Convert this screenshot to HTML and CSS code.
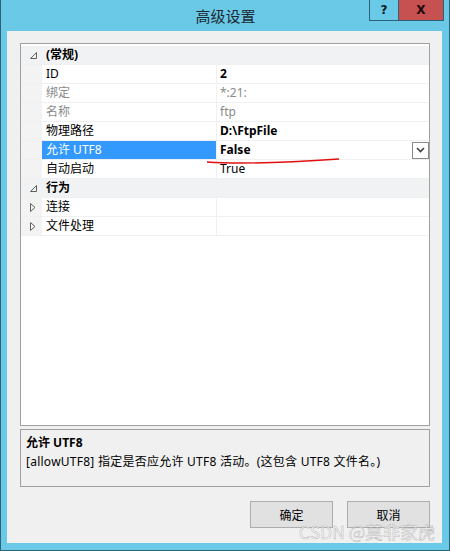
FILE: index.html
```html
<!DOCTYPE html>
<html lang="zh-CN">
<head>
    <meta charset="UTF-8">
    <title>高级设置</title>
    <link rel="stylesheet" href="styles.css">
</head>
<body>
<div class="window">
    <div class="titlebar">
        <div class="title">高级设置</div>
        <div class="caption-btns">
            <span class="cap-help">?</span><span class="cap-close">X</span>
        </div>
    </div>
    <div class="client">
        <div class="grid">
            <div class="row cat">
                <span class="gutter"><svg width="7" height="7" viewBox="0 0 7 7"><path d="M6.5 0.5 L6.5 6.5 L0.5 6.5 Z" fill="none" stroke="#606060" stroke-width="1"/></svg></span>
                <span class="label">(常规)</span><span class="value"></span>
            </div>
            <div class="row">
                <span class="gutter"></span><span class="label">ID</span><span class="value b">2</span>
            </div>
            <div class="row">
                <span class="gutter"></span><span class="label dim">绑定</span><span class="value dim">*:21:</span>
            </div>
            <div class="row">
                <span class="gutter"></span><span class="label dim">名称</span><span class="value dim">ftp</span>
            </div>
            <div class="row">
                <span class="gutter"></span><span class="label">物理路径</span><span class="value b">D:\FtpFile</span>
            </div>
            <div class="row sel">
                <span class="gutter"></span><span class="label">允许 UTF8</span>
                <span class="value b">False<span class="drop"><svg width="9" height="6" viewBox="0 0 9 6"><path d="M1 1 L4.5 4.5 L8 1" fill="none" stroke="#404040" stroke-width="1.6"/></svg></span></span>
            </div>
            <div class="row">
                <span class="gutter"></span><span class="label">自动启动</span><span class="value">True</span>
            </div>
            <div class="row cat">
                <span class="gutter"><svg width="7" height="7" viewBox="0 0 7 7"><path d="M6.5 0.5 L6.5 6.5 L0.5 6.5 Z" fill="none" stroke="#606060" stroke-width="1"/></svg></span>
                <span class="label">行为</span><span class="value"></span>
            </div>
            <div class="row">
                <span class="gutter"><svg width="6" height="9" viewBox="0 0 6 9"><path d="M0.5 0.5 L5 4.5 L0.5 8.5 Z" fill="none" stroke="#606060" stroke-width="1"/></svg></span>
                <span class="label">连接</span><span class="value"></span>
            </div>
            <div class="row">
                <span class="gutter"><svg width="6" height="9" viewBox="0 0 6 9"><path d="M0.5 0.5 L5 4.5 L0.5 8.5 Z" fill="none" stroke="#606060" stroke-width="1"/></svg></span>
                <span class="label">文件处理</span><span class="value"></span>
            </div>
            <!-- 手画的红线 -->
            <svg class="redline" width="450" height="551" viewBox="0 0 450 551"><path d="M206 162 Q 250 165 338 159" fill="none" stroke="#e01010" stroke-width="1.5"/></svg>
        </div>
        <div class="desc">
            <div class="desc-title">允许 UTF8</div>
            <div class="desc-text">[allowUTF8] 指定是否应允许 UTF8 活动。(这包含 UTF8 文件名。)</div>
        </div>
        <div class="buttons">
            <span class="btn">确定</span><span class="btn">取消</span>
        </div>
    </div>
    <div class="watermark">CSDN @莫非家虎</div>
</div>
</body>
</html>
```

FILE: styles.css
```css
* {
    padding: 0;
    margin: 0;
    box-sizing: border-box;
}

body {
    font-family: "Noto Sans", "Noto Sans CJK SC", sans-serif;
    font-size: 12px;
    color: #000;
}

.window {
    width: 450px;
    height: 551px;
    border: 1px solid #2d6276;
    border-top: 0;
    background: #6bc9e8;
    display: flex;
    flex-direction: column;
    position: relative;
    overflow: hidden;
}

.titlebar {
    height: 31px;
    display: grid;
    grid-template-columns: 1fr auto 1fr;
}

.title {
    grid-column: 2;
    font-family: "Noto Sans CJK SC", sans-serif;
    font-size: 15px;
    line-height: 31px;
    color: #1c2a30;
    padding-left: 1px;
}

.caption-btns {
    grid-column: 3;
    justify-self: end;
    display: flex;
    height: 21px;
    margin-right: 5px;
}

.cap-help, .cap-close {
    display: block;
    height: 21px;
    font-family: "DejaVu Sans", sans-serif;
    font-weight: bold;
    text-align: center;
    line-height: 20px;
    font-size: 12px;
    border: 1px solid #2d6276;
    border-top: 0;
}

.cap-help {
    width: 29px;
    color: #0d1a22;
    background: #6bc9e8;
    border-right: 0;
}

.cap-close {
    width: 46px;
    background: #c75050;
    color: #1a0a0a;
}

.client {
    flex: 1;
    margin: 0 7px 7px 6px;
    background: #f0f0f0;
    padding: 12px 12px 0 13px;
    display: flex;
    flex-direction: column;
}

.grid {
    height: 383px;
    border: 1px solid #a0a0a0;
    background: #fff;
    padding-top: 2px;
}

.row {
    display: grid;
    grid-template-columns: 21px 174px 1fr;
    height: 19px;
    line-height: 18px;
    border-bottom: 1px solid #f0f0f0;
}

.gutter {
    background: #f3f3f3;
    display: flex;
    align-items: center;
    justify-content: center;
    padding-left: 3px;
}

.label {
    padding-left: 4px;
}

.value {
    border-left: 1px solid #f0f0f0;
    padding-left: 3px;
    display: flex;
    align-items: center;
}

.b {
    font-weight: bold;
}

.dim {
    color: #8a8a8a;
}

.cat {
    background: #f1f2f4;
}

.cat .label {
    font-weight: bold;
}

.cat .gutter {
    background: #f1f2f4;
}

.cat .value {
    border-left-color: #f1f2f4;
}

.sel .label {
    background: #3399ff;
    color: #fff;
}

.drop {
    margin-left: auto;
    width: 17px;
    height: 17px;
    border: 1px solid #8a8a8a;
    background: #fff;
    display: flex;
    align-items: center;
    justify-content: center;
}

.redline {
    position: absolute;
    left: 0;
    top: 0;
    pointer-events: none;
}

.desc {
    margin-top: 3px;
    height: 58px;
    border: 1px solid #a0a0a0;
    padding: 3px 0 0 5px;
    line-height: 19px;
}

.desc-title {
    font-weight: bold;
}

.desc-text {
    letter-spacing: 0.25px;
}

.buttons {
    margin-top: 14px;
    display: flex;
    justify-content: flex-end;
    gap: 14px;
}

.btn {
    display: block;
    width: 83px;
    height: 27px;
    border: 1px solid #adadad;
    background: #e1e1e1;
    text-align: center;
    line-height: 25px;
    font-family: "Noto Sans CJK SC", sans-serif;
}

.watermark {
    position: absolute;
    left: 298px;
    top: 519px;
    font-family: "Noto Sans CJK SC", sans-serif;
    font-size: 17.5px;
    color: rgba(250, 250, 250, 0.75);
    -webkit-text-stroke: 0.5px rgba(140, 140, 140, 0.6);
    white-space: nowrap;
}
```
